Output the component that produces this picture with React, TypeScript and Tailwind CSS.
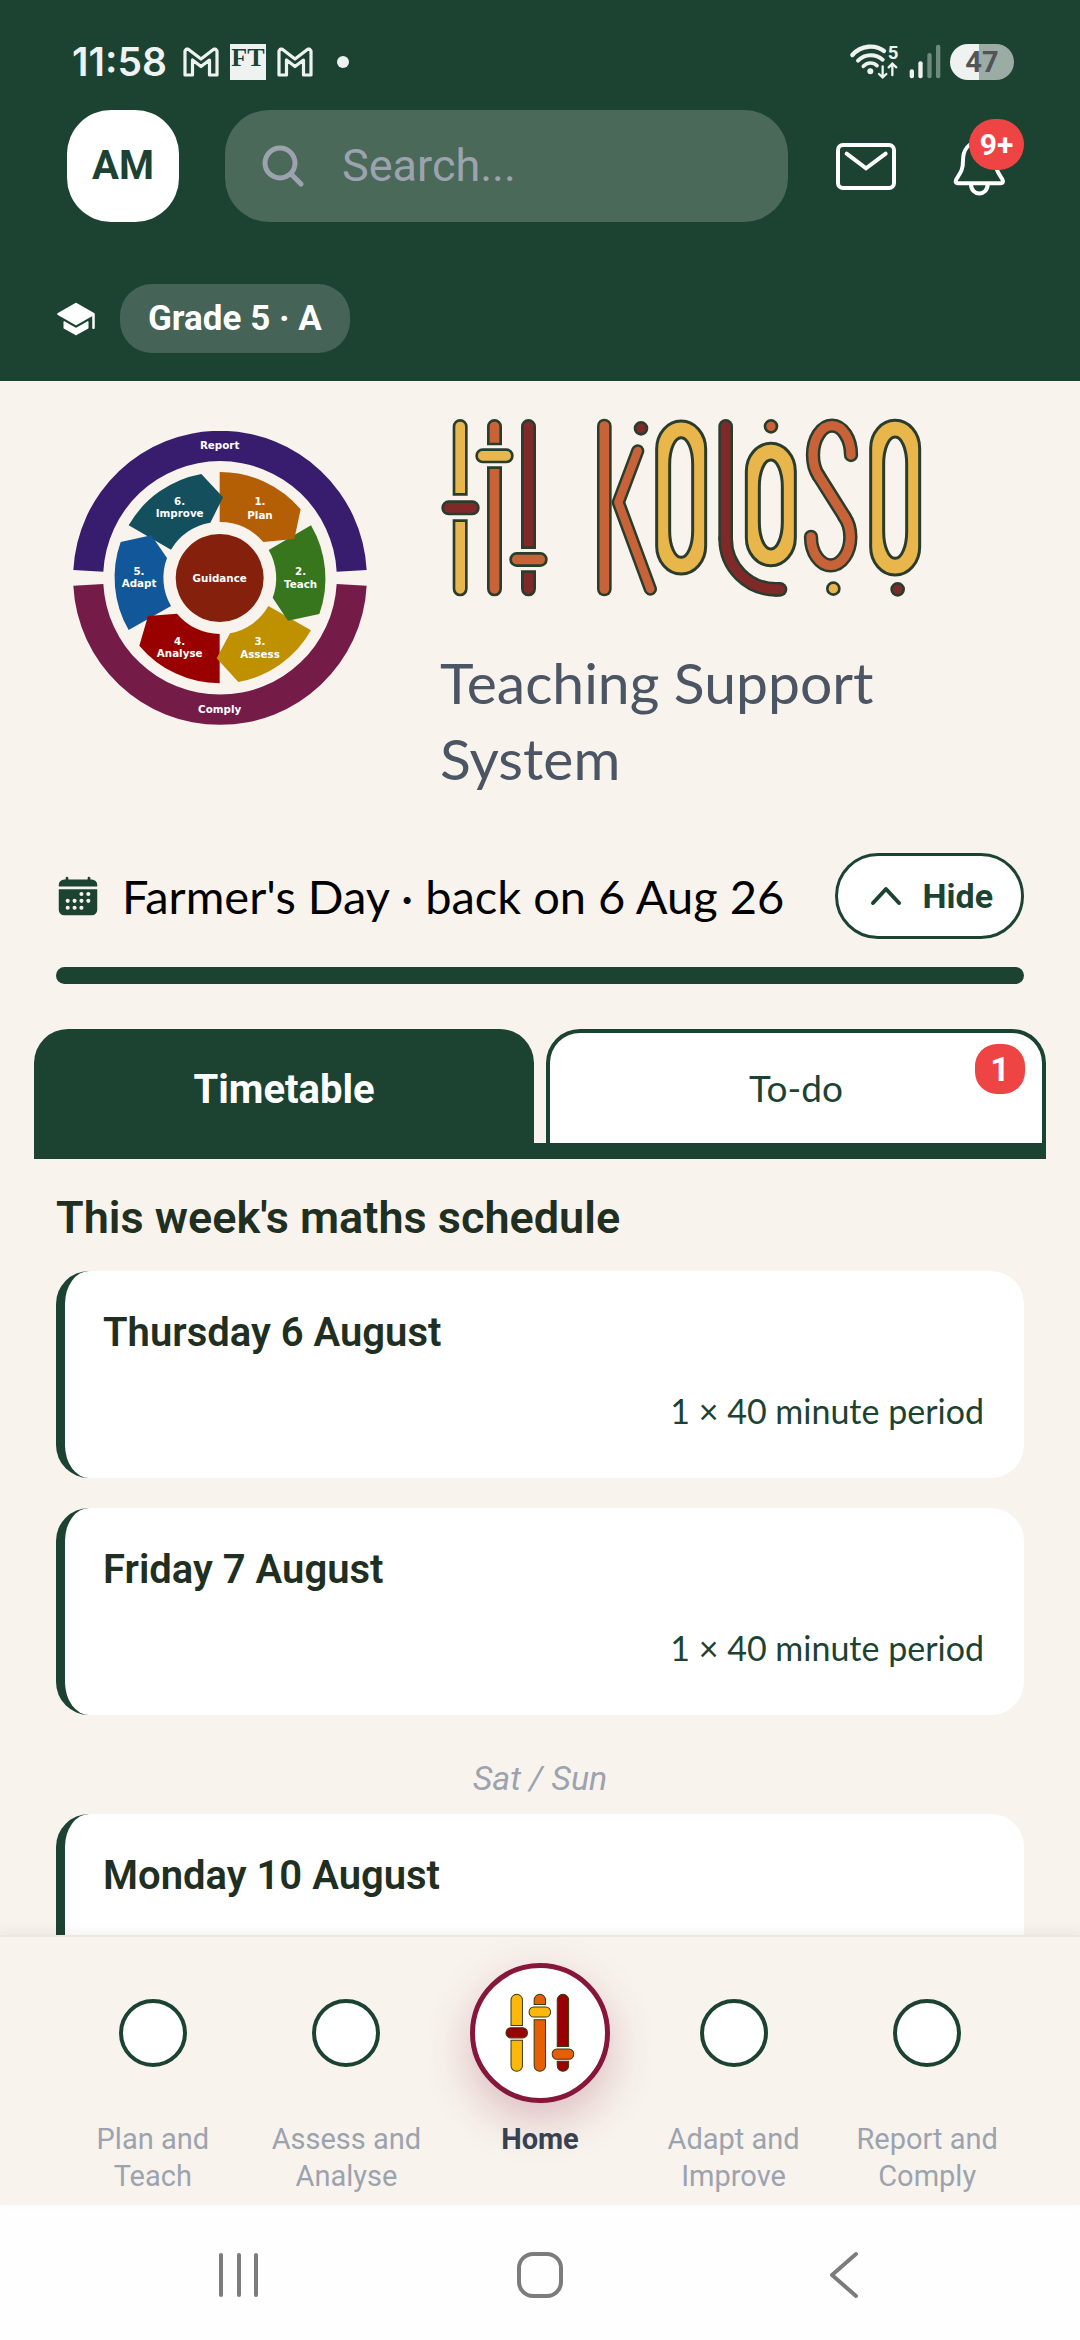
import type { ReactNode } from "react";
import { IoCalendar, IoSchool } from "react-icons/io5";

const days = [
  { label: "Thursday 6 August", periods: "1 × 40 minute period" },
  { label: "Friday 7 August", periods: "1 × 40 minute period" },
  { label: "Monday 10 August", afterWeekend: true },
];

const leftNav = [
  { id: "plan", label: "Plan and Teach" },
  { id: "assess", label: "Assess and Analyse" },
];

const rightNav = [
  { id: "adapt", label: "Adapt and Improve" },
  { id: "report", label: "Report and Comply" },
];

const segments = [
  { fill: "#134f5c", d: "M234 346 A316 316 0 0 1 452 192 L517 262 L479 338 A168 168 0 0 0 361 419 Z" },
  { fill: "#115799", d: "M234 660 A316 316 0 0 1 210 396 L302 376 L349 444 A168 168 0 0 0 361 588 Z" },
  { fill: "#990000", d: "M507 820 A316 316 0 0 1 266 707 L292 618 L379 611 A168 168 0 0 0 507 672 Z" },
  { fill: "#bf9000", d: "M781 661 A316 316 0 0 1 563 816 L498 745 L538 670 A168 168 0 0 0 653 588 Z" },
  { fill: "#38761d", d: "M781 346 A316 316 0 0 1 806 612 L712 632 L666 563 A168 168 0 0 0 654 420 Z" },
  { fill: "#b45f06", d: "M507 186 A316 316 0 0 1 750 298 L731 387 L638 396 A168 168 0 0 0 507 336 Z" },
  { fill: "#134f5c", d: "M506 250 L517 262 L506 284 Z" },
];

const wheelLabels = [
  { x: 507, y: 116, text: "Report" },
  { x: 507, y: 515, text: "Guidance" },
  { x: 507, y: 908, text: "Comply" },
  { x: 628, y: 285, text: "1." },
  { x: 628, y: 326, text: "Plan" },
  { x: 750, y: 495, text: "2." },
  { x: 750, y: 535, text: "Teach" },
  { x: 628, y: 705, text: "3." },
  { x: 628, y: 744, text: "Assess" },
  { x: 387, y: 705, text: "4." },
  { x: 387, y: 742, text: "Analyse" },
  { x: 265, y: 495, text: "5." },
  { x: 265, y: 532, text: "Adapt" },
  { x: 387, y: 285, text: "6." },
  { x: 387, y: 321, text: "Improve" },
];

function GuidanceWheel() {
  return (
    <svg viewBox="67 63 882 882" className="w-[294px] shrink-0" role="img" aria-label="Guidance cycle">
      <path d="M68 480 A440.600 440.600 0 0 1 948 480 L858 485 A350.500 350.500 0 0 0 158 485 Z" fill="#381d6f" />
      <path d="M68 527 A440.600 440.600 0 0 0 948 527 L858 522 A350.500 350.500 0 0 1 158 522 Z" fill="#741b47" />
      {segments.map(({ fill, d }) => (
        <path key={d} d={d} fill={fill} />
      ))}
      <circle cx="507" cy="504" r="132" fill="#85200c" />
      <g fill="#fff" fontFamily="DejaVu Sans, sans-serif" fontWeight="700" fontSize="31" textAnchor="middle">
        {wheelLabels.map(({ x, y, text }) => (
          <text key={text} x={x} y={y}>
            {text}
          </text>
        ))}
      </g>
    </svg>
  );
}

type BarProps = { x: number; y: number; w: number; h: number; fill: string; cap: "top" | "bottom" };

// slider track with one rounded end
function Bar({ x, y, w, h, fill, cap }: BarProps) {
  const r = w / 2;
  const d =
    cap === "top"
      ? `M${x} ${y + h} V${y + r} A${r} ${r} 0 0 1 ${x + w} ${y + r} V${y + h} Z`
      : `M${x} ${y} H${x + w} V${y + h - r} A${r} ${r} 0 0 1 ${x} ${y + h - r} Z`;
  return <path d={d} fill={fill} />;
}

// a stroked shape drawn twice: dark outline first, colour on top
function Tube({ color, width = 44, children }: { color: string; width?: number; children: ReactNode }) {
  return (
    <g fill="none" strokeLinecap="round" strokeLinejoin="round">
      <g stroke="#2a3d2c" strokeWidth={width}>
        {children}
      </g>
      <g stroke={color} strokeWidth={width - 15}>
        {children}
      </g>
    </g>
  );
}

function Ring({ x, y, h }: { x: number; y: number; h: number }) {
  return (
    <g stroke="#2a3d2c" strokeWidth="9">
      <rect x={x + 4} y={y + 4} width="147" height={h - 8} rx="73" ry="84" fill="#e8b64a" />
      <rect x={x + 43} y={y + 54} width="69" height={h - 108} rx="34" ry="80" fill="#f8f3ed" />
    </g>
  );
}

function Logo() {
  return (
    <svg viewBox="60 53 1446 540" className="w-[482px]" role="img" aria-label="Koloso">
      <g stroke="#2a3d2c" strokeWidth="8">
        <Bar x={102} y={60} w={37} h={222} fill="#e8b64a" cap="top" />
        <Bar x={102} y={361} w={37} h={223} fill="#e8b64a" cap="bottom" />
        <Bar x={205} y={60} w={37} h={71} fill="#c86239" cap="top" />
        <Bar x={205} y={202} w={37} h={382} fill="#c86239" cap="bottom" />
        <Bar x={307} y={60} w={37} h={382} fill="#7f2a29" cap="top" />
        <Bar x={307} y={514} w={37} h={70} fill="#7f2a29" cap="bottom" />
        <rect x="68" y="304" width="107" height="37" rx="18" fill="#7f2a29" />
        <rect x="170" y="148" width="107" height="37" rx="18" fill="#e8b64a" />
        <rect x="272" y="459" width="107" height="37" rx="18" fill="#c86239" />
      </g>

      <Tube color="#c86239" width={40}>
        <polyline points="653,152 595,306 691,566" />
      </Tube>
      <Tube color="#c86239">
        <line x1="553" y1="77" x2="553" y2="566" />
      </Tube>
      <Ring x={706} y={58} h={467} />
      <Tube color="#7f2a29">
        <line x1="917" y1="78" x2="917" y2="415" />
        <circle cx="1068" cy="416" r="151" pathLength="360" strokeDasharray="90 270" strokeDashoffset="-90" />
        <line x1="1068" y1="567" x2="1080" y2="567" />
      </Tube>
      <Ring x={975} y={125} h={375} />
      <Tube color="#c86239" width={43}>
        <ellipse cx="1236" cy="164" rx="57" ry="88" pathLength="360" strokeDasharray="232 128" strokeDashoffset="-128" />
        <ellipse cx="1232" cy="410" rx="59" ry="85" pathLength="360" strokeDasharray="232 128" strokeDashoffset="52" />
        <line x1="1196" y1="226" x2="1274" y2="350" />
      </Tube>
      <Ring x={1348} y={56} h={472} />

      <g stroke="#2a3d2c" strokeWidth="8">
        <circle cx="663" cy="84" r="18" fill="#7f2a29" />
        <circle cx="1053" cy="78" r="18" fill="#c86239" />
        <circle cx="1240" cy="565" r="18" fill="#e8b64a" />
        <circle cx="1433" cy="567" r="18" fill="#7f2a29" />
      </g>
    </svg>
  );
}

function HomeIcon() {
  return (
    <svg viewBox="190 160 215 244" className="w-[72px]" aria-hidden="true">
      <g stroke="#3b3a12" strokeWidth="3">
        <Bar x={211} y={167} w={34} h={93} fill="#fdb90b" cap="top" />
        <Bar x={211} y={304} w={34} h={93} fill="#fdb90b" cap="bottom" />
        <Bar x={280} y={167} w={34} h={30} fill="#e65f04" cap="top" />
        <Bar x={280} y={243} w={34} h={154} fill="#e65f04" cap="bottom" />
        <Bar x={349} y={167} w={34} h={156} fill="#980004" cap="top" />
        <Bar x={349} y={367} w={34} h={30} fill="#980004" cap="bottom" />
        <rect x="196" y="267" width="64" height="30" rx="14" fill="#980004" />
        <rect x="265" y="205" width="64" height="30" rx="14" fill="#fdb90b" />
        <rect x="334" y="330" width="64" height="31" rx="14" fill="#e65f04" />
      </g>
    </svg>
  );
}

function GmailIcon() {
  return (
    <svg viewBox="0 0 36 30" className="w-9" aria-hidden="true">
      <path
        d="M3.500 2 H5 L18 12 L31 2 H32.500 L34 4 V28 H26.500 V13 L18 19.500 L9.500 13 V28 H2 V4 Z"
        fill="none"
        stroke="#eef2f0"
        strokeWidth="3.200"
        strokeLinejoin="round"
      />
    </svg>
  );
}

function StatusBar() {
  return (
    <div className="flex h-9 items-center justify-between pl-[72px] pr-[66px] text-[#eef2f0]">
      <div className="flex items-center">
        <span className="font-[Inter,sans-serif] text-[39px] font-semibold leading-9">11:58</span>
        <div className="ml-4 flex items-center gap-[11px]">
          <GmailIcon />
          <span className="h-9 w-9 bg-[#eef2f0] text-center font-['Liberation_Serif',serif] text-[26px] font-bold leading-7 text-[#1c4332]">
            FT
          </span>
          <GmailIcon />
        </div>
        <span className="ml-6 h-3 w-3 rounded-full bg-[#eef2f0]" />
      </div>
      <div className="flex items-center gap-2">
        <svg viewBox="85 41 280 108" className="h-9 overflow-visible" aria-hidden="true">
          <g fill="none" stroke="#eef2f0" strokeLinecap="round">
            <path d="M95 74 C122 43 165 43 190 62" strokeWidth="13" />
            <path d="M112 91 C133 70 165 70 186 88" strokeWidth="12" />
            <path d="M128 108 C140 95 158 95 169 106" strokeWidth="11" />
            <path d="M186 108 V140 M175 131 L186 141 L197 131" strokeWidth="7" />
            <path d="M215 134 V102 M204 111 L215 100 L227 111" strokeWidth="7" />
          </g>
          <circle cx="149" cy="123" r="9" fill="#eef2f0" />
          <text x="201" y="87" fill="#eef2f0" fontFamily="Roboto, sans-serif" fontWeight="700" fontSize="56">
            5
          </text>
          <rect x="267" y="117" width="13" height="27" rx="6" fill="#eef2f0" />
          <rect x="293" y="93" width="13" height="51" rx="6" fill="#eef2f0" />
          <rect x="320" y="68" width="13" height="76" rx="6" fill="#6d8a7c" />
          <rect x="346" y="43" width="13" height="101" rx="6" fill="#6d8a7c" />
        </svg>
        <span className="h-9 w-16 rounded-full bg-linear-to-r from-[#eef2f0] from-46% to-[#9aaca3] to-46% text-center font-[Roboto,sans-serif] text-[29px] font-bold leading-9 text-[#525458]">
          47
        </span>
      </div>
    </div>
  );
}

function Header() {
  return (
    <header className="shrink-0 bg-[#1c4332] pb-7 pt-11">
      <StatusBar />
      <div className="mt-[30px] flex h-28 items-center pl-[67px] pr-14">
        <button className="h-28 w-28 shrink-0 rounded-[44px] bg-white text-[40px] font-bold text-[#1c4332]">AM</button>
        <label className="ml-[46px] flex h-28 min-w-0 flex-1 items-center rounded-[44px] bg-[#4a6959] pl-[37px]">
          <svg viewBox="0 0 42 42" className="w-[42px] shrink-0" fill="none" stroke="#9ca3af" strokeWidth="5" aria-hidden="true">
            <circle cx="18" cy="18" r="15" />
            <path d="M29 29 L39 39" strokeLinecap="round" />
          </svg>
          <input
            type="search"
            aria-label="Search"
            placeholder="Search..."
            className="ml-[38px] min-w-0 flex-1 bg-transparent text-[45px] outline-none placeholder:text-[#9ca3af]"
          />
        </label>
        <button aria-label="Messages" className="ml-12 shrink-0">
          <svg viewBox="48 336 180 141" className="w-[60px]" fill="none" stroke="#fff" strokeWidth="12">
            <rect x="54" y="342" width="168" height="129" rx="15" />
            <path d="M80 368 L138 412 L197 368" strokeLinecap="round" />
          </svg>
        </button>
        <button aria-label="Notifications" className="relative ml-14 w-[72px] shrink-0">
          <svg viewBox="395 325 165 175" className="mt-1 w-[55px]" fill="none" stroke="#fff" strokeWidth="12" strokeLinejoin="round">
            <path d="M414 458 C402 458 406 448 411 441 C422 424 428 415 428 390 C428 358 444 335 477 335 C510 335 526 358 526 390 C526 415 532 424 543 441 C548 448 552 458 540 458 Z" />
            <path d="M452 460 C452 498 502 498 502 460" />
          </svg>
          <span className="absolute -top-4 right-0 h-[51px] w-[55px] rounded-full bg-[#ef4444] text-[30px] font-bold leading-[51px] text-white">
            9+
          </span>
        </button>
      </div>
      <div className="mt-[62px] flex items-center gap-6 pl-14">
        <IoSchool size={40} className="text-white" aria-hidden="true" />
        <button className="rounded-[32px] bg-[#456457] px-7 text-[35px] font-bold leading-[69px] text-white">
          Grade 5 · A
        </button>
      </div>
    </header>
  );
}

function DayCard({ label, periods }: { label: string; periods?: string }) {
  return (
    <li className="min-h-[207px] rounded-[33px] border-l-[9px] border-[#1c4332] bg-white pb-10 pl-[38px] pr-10 pt-9">
      <h3 className="text-[40px] font-semibold leading-[52px] text-[#1f2f21]">{label}</h3>
      {periods && (
        <p className="mt-[26px] text-right font-[Lato,sans-serif] text-[34px] leading-[51px] text-[#1c4332]">
          {periods}
        </p>
      )}
    </li>
  );
}

function NavItem({ id, label }: { id: string; label: string }) {
  return (
    <a href={`#${id}`} className="flex flex-1 flex-col items-center pt-[62px] text-center text-[#9ca3af]">
      <span className="h-[68px] w-[68px] rounded-full border-4 border-[#1c4332] bg-white" />
      <span className="mt-[54px] w-40 text-[29px] leading-[37px]">{label}</span>
    </a>
  );
}

export default function App() {
  return (
    <div className="flex h-screen flex-col bg-[#f8f3ed] font-[Roboto,sans-serif]">
      <Header />

      <main className="min-h-0 flex-1 overflow-y-auto [scrollbar-width:none]">
        <section className="flex items-start gap-[73px] pl-[73px] pr-14 pt-[37px]">
          <div className="shrink-0 pt-[13px]">
            <GuidanceWheel />
          </div>
          <div>
            <Logo />
            <p className="mt-[46px] font-[Lato,sans-serif] text-[57px] leading-[76px] text-[#4b5563]">
              Teaching Support System
            </p>
          </div>
        </section>

        <section className="mt-[57px] px-14">
          <div className="flex items-center">
            <IoCalendar size={44} className="shrink-0 text-[#1c4332]" aria-hidden="true" />
            <p className="ml-[22px] flex-1 whitespace-nowrap font-[Lato,sans-serif] text-[47px] leading-[60px]">
              Farmer's Day · back on 6 Aug 26
            </p>
            <button className="flex h-[86px] shrink-0 items-center gap-5 rounded-full border-[3px] border-[#1c4332] bg-white pl-8 pr-7 text-[34px] font-bold text-[#1c4332]">
              <svg viewBox="0 0 32 20" className="w-8" fill="none" stroke="currentColor" strokeWidth="4" strokeLinecap="round" strokeLinejoin="round" aria-hidden="true">
                <path d="M3 17 L16 3 L29 17" />
              </svg>
              Hide
            </button>
          </div>
          <div className="mt-7 h-[17px] rounded-full bg-[#1c4332]" />
        </section>

        <div role="tablist" className="mx-[34px] mt-[45px] grid grid-cols-2 gap-3 border-b-[16px] border-[#1c4332]">
          <button role="tab" aria-selected="true" className="h-[114px] rounded-t-[34px] bg-[#1c4332] pt-2 text-[40px] font-bold text-white">
            Timetable
          </button>
          <button role="tab" aria-selected="false" className="relative h-[114px] rounded-t-[34px] border-4 border-b-0 border-[#1c4332] bg-white font-[Lato,sans-serif] text-[37px] text-[#1c4332]">
            To-do
            <span className="absolute right-[17px] top-[11px] h-[50px] w-[50px] rounded-[22px] bg-[#ef4444] font-[Roboto,sans-serif] text-[34px] font-bold leading-[50px] text-white">
              1
            </span>
          </button>
        </div>

        <section className="px-14 pt-[29px]">
          <h2 className="text-[45px] font-semibold leading-[60px] text-[#1f2f21]">This week's maths schedule</h2>
          <ul className="mt-[23px] flex flex-col gap-[30px]">
            {days.map(({ label, periods, afterWeekend }) => (
              <div key={label} className="contents">
                {afterWeekend && (
                  <li className="-mb-5 mt-2 text-center text-[34px] italic leading-[51px] text-[#9ca3af]">Sat / Sun</li>
                )}
                <DayCard label={label} periods={periods} />
              </div>
            ))}
          </ul>
        </section>
      </main>

      <nav className="relative flex shrink-0 border-t-2 border-[#ebe8e4] bg-[#f8f3ed] px-14 pb-[10px] shadow-[0_-4px_12px_rgba(0,0,0,0.05)]">
        {leftNav.map((item) => (
          <NavItem key={item.id} {...item} />
        ))}
        <a href="#home" className="flex flex-1 flex-col items-center pt-[26px] text-[#374151]">
          <span className="flex h-[140px] w-[140px] items-center justify-center rounded-full border-[5px] border-[#86163a] bg-white shadow-[0_17px_45px_rgba(134,22,58,0.25)]">
            <HomeIcon />
          </span>
          <span className="mt-[18px] text-[29px] font-bold leading-[37px]">Home</span>
        </a>
        {rightNav.map((item) => (
          <NavItem key={item.id} {...item} />
        ))}
      </nav>

      <div className="flex h-[135px] shrink-0 items-center justify-between bg-[#fefefe] px-[218px] pt-1 text-[#7c7c7c]">
        <button aria-label="Recent apps">
          <svg viewBox="0 0 42 44" className="w-[42px]" fill="none" stroke="currentColor" strokeWidth="4" strokeLinecap="round">
            <path d="M3 2 V42 M21 2 V42 M38 2 V42" />
          </svg>
        </button>
        <button aria-label="Home screen">
          <svg viewBox="0 0 46 46" className="w-[46px]" fill="none" stroke="currentColor" strokeWidth="4">
            <rect x="2" y="2" width="42" height="42" rx="14" />
          </svg>
        </button>
        <button aria-label="Back">
          <svg viewBox="0 0 42 48" className="w-[42px]" fill="none" stroke="currentColor" strokeWidth="4" strokeLinecap="round" strokeLinejoin="round">
            <path d="M36 3 L12 24 L36 45" />
          </svg>
        </button>
      </div>
    </div>
  );
}
